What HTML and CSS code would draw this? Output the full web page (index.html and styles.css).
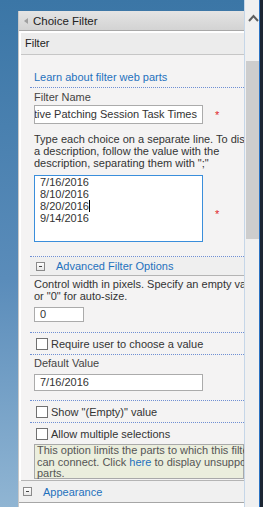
FILE: index.html
```html
<!DOCTYPE html>
<html lang="en">
<head>
    <meta charset="UTF-8">
    <title>Choice Filter</title>
    <link rel="stylesheet" href="styles.css">
</head>
<body>

    <div class="screen">
        <div class="desk">
            <div class="panel">
                <!-- Tool pane title -->
                <div class="panel-title">
                    <span class="back-arrow"></span>
                    Choice Filter
                </div>

                <div class="group-head">Filter</div>

                <div class="group-body">
                    <div class="item learn">
                        <a href="#">Learn about filter web parts</a>
                    </div>

                    <div class="item">
                        <div class="label first">Filter Name</div>
                        <div class="field-row">
                            <div class="input wide name-input"><span>Active Patching Session Task Times</span></div>
                            <span class="required">*</span>
                        </div>

                        <div class="help">
                            Type each choice on a separate line. To display<br>
                            a description, follow the value with the<br>
                            description, separating them with ";"
                        </div>

                        <div class="field-row">
                            <div class="textarea">
                                7/16/2016<br>
                                8/10/2016<br>
                                8/20/2016<span class="caret"></span><br>
                                9/14/2016
                            </div>
                            <span class="required">*</span>
                        </div>
                    </div>

                    <!-- Advanced options -->
                    <div class="sub-head">
                        <span class="toggle"></span>
                        <a href="#">Advanced Filter Options</a>
                    </div>

                    <div class="item">
                        <div class="help tight">
                            Control width in pixels. Specify an empty value<br>
                            or "0" for auto-size.
                        </div>
                        <div class="input small">0</div>
                    </div>

                    <div class="item check">
                        <span class="box"></span> Require user to choose a value
                    </div>

                    <div class="item">
                        <div class="label">Default Value</div>
                        <div class="input wide default">7/16/2016</div>
                    </div>

                    <div class="item check">
                        <span class="box"></span> Show "(Empty)" value
                    </div>

                    <div class="item check last">
                        <span class="box"></span> Allow multiple selections
                    </div>

                    <div class="note">
                        This option limits the parts to which this filter web part<br>
                        can connect. Click <a href="#">here</a> to display unsupported<br>
                        parts.
                    </div>
                </div>

                <div class="group-foot">
                    <span class="toggle"></span>
                    <a href="#">Appearance</a>
                </div>
            </div>
        </div>

        <!-- Page scrollbar -->
        <div class="scrollbar">
            <svg class="up" width="11" height="8" viewBox="0 0 11 8">
                <polyline points="1,7 5.5,2 10,7" fill="none" stroke="#5f5f5f" stroke-width="2"/>
            </svg>
            <span class="thumb"></span>
        </div>
        <div class="edge"></div>
    </div>

</body>
</html>
```

FILE: styles.css
```css
body {
    margin: 0;
    font-family: "Liberation Sans", Arial, sans-serif;
    font-size: 11px;
    color: #444;
}

a {
    color: #1f71bd;
    text-decoration: none;
}

.screen {
    display: flex;
    width: 263px;
    height: 507px;
    overflow: hidden;
}

/* Blue page background behind the tool pane */
.desk {
    width: 244px;
    box-sizing: border-box;
    padding: 11px 0 0 18px;
    background: linear-gradient(#3b76a6, #5a8cba 55%, #90b5d3);
}

.panel {
    height: 496px;
    background: #fff;
    overflow: hidden;
    border-left: 1px solid #c8c8c8;
    box-sizing: border-box;
}

.panel-title {
    display: flex;
    align-items: center;
    height: 19px;
    padding-left: 5px;
    background: linear-gradient(#e4e4e4, #d3d3d3);
    border-bottom: 1px solid #a8a8a8;
    color: #222;
    font-size: 11.5px;
}

.back-arrow {
    width: 0;
    height: 0;
    border-top: 3px solid transparent;
    border-bottom: 3px solid transparent;
    border-right: 4px solid #a0a0a0;
    margin-right: 5px;
}

.group-head {
    height: 21px;
    line-height: 21px;
    margin: 2px 0 0 2px;
    padding-left: 4px;
    background: #ececec;
    border-bottom: 1px solid #c6c6c6;
    color: #222;
}

.group-body {
    margin-left: 2px;
    padding-left: 9px;
    height: 425px;
    background: #f4f3f3;
    border-bottom: 1px solid #b4b4b4;
    white-space: nowrap;
}

.item {
    padding-left: 4px;
    border-bottom: 1px dotted #6f8fd3;
}

.item.last {
    border-bottom: none;
}

.learn {
    padding-top: 16px;
    padding-bottom: 3px;
    line-height: 13px;
}

.label {
    line-height: 12px;
    padding-top: 2px;
}

.label.first {
    padding-top: 3px;
}

.field-row {
    display: flex;
    align-items: center;
    margin-top: 2px;
}

.input {
    box-sizing: border-box;
    border: 1px solid #ababab;
    background: #fff;
    padding-left: 5px;
    color: #333;
    overflow: hidden;
}

.input.wide {
    width: 169px;
}

.name-input {
    display: flex;
    justify-content: flex-end;
    padding-right: 5px;
    height: 19px;
    line-height: 17px;
}

.required {
    color: #e0262b;
    font-size: 11px;
    margin-left: 12px;
}

.help {
    line-height: 12px;
    margin-top: 9px;
    color: #333;
}

.help.tight {
    margin-top: 2px;
}

.textarea {
    box-sizing: border-box;
    width: 169px;
    height: 67px;
    margin-top: 4px;
    margin-bottom: 14px;
    padding: 1px 0 0 5px;
    border: 1px solid #3a8edb;
    background: #fff;
    line-height: 11.5px;
    color: #333;
}

.caret {
    display: inline-block;
    width: 1px;
    height: 12px;
    background: #000;
    vertical-align: -2px;
}

.sub-head {
    display: flex;
    align-items: center;
    height: 18px;
    padding-left: 6px;
    background: #efefef;
    border-bottom: 1px solid #b4b4b4;
}

.sub-head a {
    margin-left: 11px;
}

.toggle {
    width: 7px;
    height: 7px;
    border: 1px solid #8a8a8a;
    background: linear-gradient(#fff, #e6e6e6);
    position: relative;
}

.toggle::after {
    content: "";
    position: absolute;
    left: 2px;
    top: 3px;
    width: 3px;
    height: 1px;
    background: #444;
}

.input.small {
    width: 50px;
    height: 15px;
    line-height: 13px;
    margin: 5px 0 10px;
}

.check {
    display: flex;
    align-items: center;
    height: 21px;
    padding-left: 6px;
    color: #333;
}

.box {
    width: 10px;
    height: 10px;
    border: 1px solid #707070;
    background: #fff;
    margin-right: 3px;
}

.input.default {
    height: 17px;
    line-height: 15px;
    margin: 5px 0 9px;
}

.note {
    margin: 0 0 0 4px;
    padding: 0 2px;
    height: 33px;
    background: #ebeedd;
    border: 1px solid #a9a9a9;
    line-height: 11.5px;
    color: #555;
}

.note a {
    color: #1f71bd;
}

.group-foot {
    display: flex;
    align-items: center;
    height: 21px;
    padding-left: 4px;
    background: #f0f0f0;
    border-bottom: 1px solid #a6a6a6;
}

.group-foot a {
    margin-left: 11px;
}

/* Scrollbar column on the right */
.scrollbar {
    width: 16px;
    box-sizing: border-box;
    border-left: 1px solid #c5d6e8;
    background: #f0f0f0;
    padding-top: 14px;
}

.up {
    display: block;
    margin-left: 3px;
}

.thumb {
    display: block;
    width: 13px;
    height: 178px;
    margin: 39px 0 0 1px;
    background: #cdcdcd;
}

.edge {
    width: 3px;
    border-left: 1px solid #2a72c2;
    background: #1c2633;
}
```
